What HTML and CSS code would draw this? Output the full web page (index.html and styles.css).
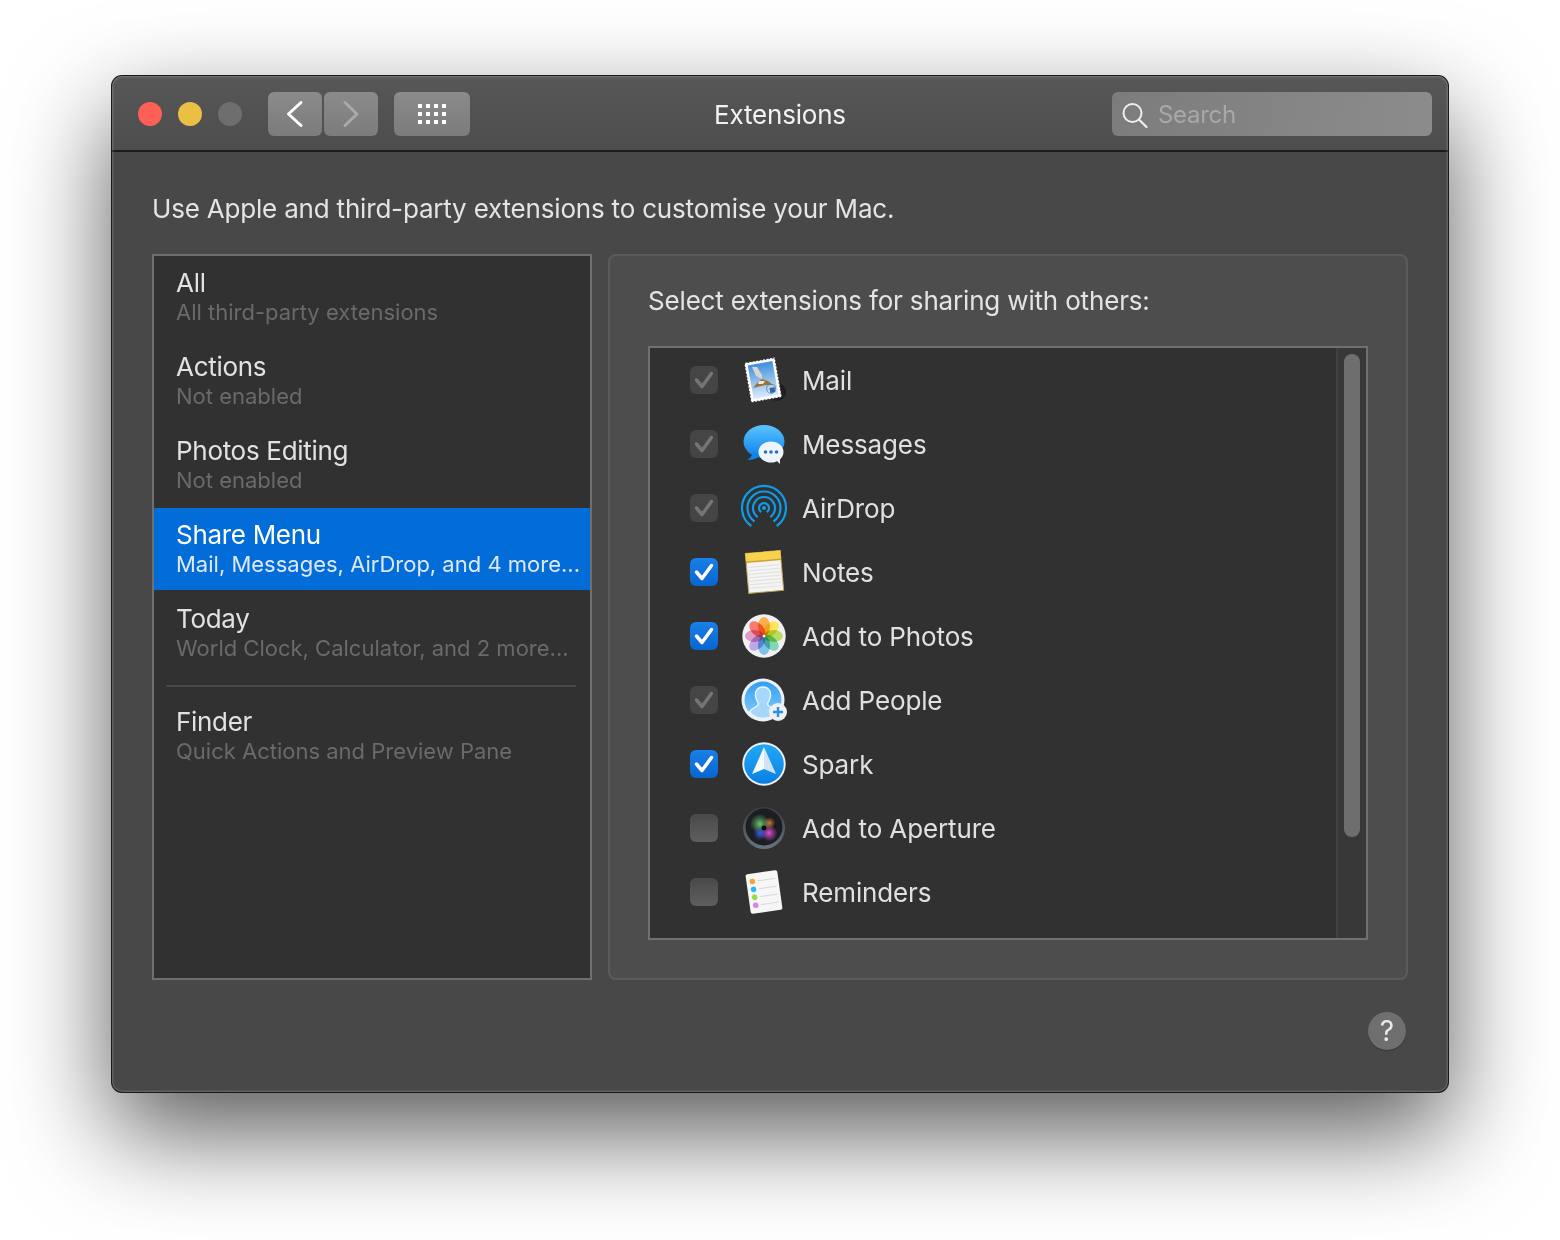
FILE: index.html
```html
<!DOCTYPE html>
<html>
<head>
    <meta charset="UTF-8">
    <title>Extensions</title>
    <link rel="stylesheet" href="styles.css">
</head>
<body>
<div class="window">
    <div class="titlebar">
        <div class="lights">
            <span class="light red"></span>
            <span class="light yellow"></span>
            <span class="light grey"></span>
        </div>
        <div class="nav">
            <div class="tbtn nav-btn">
                <svg width="54" height="44" viewBox="0 0 54 44"><path d="M33 10.500 L20.500 22 L33 33.500" fill="none" stroke="#fff" stroke-width="3" stroke-linecap="round" stroke-linejoin="round"/></svg>
            </div>
            <div class="tbtn nav-btn">
                <svg width="54" height="44" viewBox="0 0 54 44"><path d="M21 10.500 L33 22 L21 33.500" fill="none" stroke="#aaa" stroke-width="3" stroke-linecap="round" stroke-linejoin="round"/></svg>
            </div>
        </div>
        <div class="tbtn grid-btn">
            <div class="dots">
                <i></i><i></i><i></i><i></i>
                <i></i><i></i><i></i><i></i>
                <i></i><i></i><i></i><i></i>
            </div>
        </div>
        <div class="title">Extensions</div>
        <div class="search">
            <svg width="30" height="44" viewBox="0 0 30 44"><circle cx="20.500" cy="21" r="9" fill="none" stroke="#eee" stroke-width="2"/><path d="M27 27.500 L34.500 35" fill="none" stroke="#eee" stroke-width="2.200" stroke-linecap="round"/></svg>
            <span class="search-text">Search</span>
        </div>
    </div>

    <div class="content">
        <div class="intro">Use Apple and third-party extensions to customise your Mac.</div>
        <div class="columns">
            <div class="sidebar">
                <div class="item"><div class="item-name">All</div><div class="item-sub">All third-party extensions</div></div>
                <div class="item"><div class="item-name">Actions</div><div class="item-sub">Not enabled</div></div>
                <div class="item"><div class="item-name">Photos Editing</div><div class="item-sub">Not enabled</div></div>
                <div class="item active"><div class="item-name">Share Menu</div><div class="item-sub">Mail, Messages, AirDrop, and 4 more...</div></div>
                <div class="item"><div class="item-name">Today</div><div class="item-sub">World Clock, Calculator, and 2 more...</div></div>
                <div class="sep"></div>
                <div class="item"><div class="item-name">Finder</div><div class="item-sub">Quick Actions and Preview Pane</div></div>
            </div>

            <div class="panel">
                <div class="panel-title">Select extensions for sharing with others:</div>
                <div class="list">
                    <div class="rows">
                        <div class="row">
                            <span class="check locked"><svg width="28" height="28" viewBox="0 0 28 28"><path d="M6.500 14 L12 20.500 L21.500 7.500"/></svg></span>
                            <svg class="app" width="48" height="48" viewBox="0 0 48 48">
                                <defs>
                                    <linearGradient id="sky" x1="0" y1="0" x2="0" y2="1"><stop offset="0" stop-color="#3f8fdc"/><stop offset="1" stop-color="#d8ecfa"/></linearGradient>
                                </defs>
                                <circle cx="37" cy="36" r="9" fill="#1f1f21"/>
                                <g transform="rotate(-10 23 24)">
                                    <rect x="7.500" y="4" width="31" height="40" fill="#fff"/>
                                    <rect x="7.500" y="4" width="31" height="40" fill="none" stroke="#2f2f2f" stroke-width="1.200" stroke-dasharray="1.500 2"/>
                                    <rect x="10.500" y="7" width="25" height="34" fill="url(#sky)"/>
                                    <circle cx="29.500" cy="34" r="4.500" fill="none" stroke="#5f8ab3" stroke-width="1"/>
                                    <rect x="28" y="33" width="5" height="5" fill="#32689f"/>
                                </g>
                                <path d="M12 11 L17 11 L22 19 L22 23 L16 20 Z" fill="#d9d6cd"/>
                                <path d="M13 32 L18 26 L22 23 L28 25 L33 29 L26 29 L21 30 Z" fill="#9a7338"/>
                                <path d="M19 25 L25 25 L23 28 L18 28 Z" fill="#f0e6d2"/>
                            </svg>
                            <span class="row-name">Mail</span>
                        </div>
                        <div class="row">
                            <span class="check locked"><svg width="28" height="28" viewBox="0 0 28 28"><path d="M6.500 14 L12 20.500 L21.500 7.500"/></svg></span>
                            <svg class="app" width="48" height="48" viewBox="0 0 48 48">
                                <defs>
                                    <linearGradient id="bubble" x1="0" y1="0" x2="0" y2="1"><stop offset="0" stop-color="#5cc4fb"/><stop offset="1" stop-color="#0a7fee"/></linearGradient>
                                </defs>
                                <ellipse cx="24" cy="21.500" rx="20.500" ry="16.500" fill="url(#bubble)"/>
                                <path d="M13 32 Q12 37 7 40 Q15 40 20 36 Z" fill="#0d84ee"/>
                                <ellipse cx="31" cy="32" rx="12.500" ry="10.500" fill="#eef4fb"/>
                                <path d="M36 40 L40 44 L40 37 Z" fill="#eef4fb"/>
                                <circle cx="25.500" cy="32" r="1.800" fill="#2a6fc0"/>
                                <circle cx="31" cy="32" r="1.800" fill="#2a6fc0"/>
                                <circle cx="36.500" cy="32" r="1.800" fill="#2a6fc0"/>
                            </svg>
                            <span class="row-name">Messages</span>
                        </div>
                        <div class="row">
                            <span class="check locked"><svg width="28" height="28" viewBox="0 0 28 28"><path d="M6.500 14 L12 20.500 L21.500 7.500"/></svg></span>
                            <svg class="app" width="48" height="48" viewBox="0 0 48 48">
                                <g fill="none" stroke="#0f9be8" stroke-width="2.200">
                                    <path d="M11.400 42 A22 22 0 1 1 36.600 42"/>
                                    <path d="M14.500 37.500 A16.500 16.500 0 1 1 33.500 37.500"/>
                                    <path d="M17.700 33 A11 11 0 1 1 30.300 33"/>
                                    <path d="M21.100 28.100 A5 5 0 1 1 26.900 28.100"/>
                                </g>
                                <circle cx="24" cy="24" r="2" fill="#0f9be8"/>
                            </svg>
                            <span class="row-name">AirDrop</span>
                        </div>
                        <div class="row">
                            <span class="check on"><svg width="28" height="28" viewBox="0 0 28 28"><path d="M6.500 14 L12 20.500 L21.500 7.500"/></svg></span>
                            <svg class="app" width="48" height="48" viewBox="0 0 48 48">
                                <g transform="rotate(-5 24 24)">
                                    <rect x="7" y="4" width="35" height="40" fill="#f4f4f2" stroke="#b99a55" stroke-width="1"/>
                                    <g stroke="#e0e0e0" stroke-width="1">
                                        <path d="M7 18 H42 M7 21.500 H42 M7 25 H42 M7 28.500 H42 M7 32 H42 M7 35.500 H42 M7 39 H42"/>
                                    </g>
                                    <rect x="7" y="4" width="35" height="9" fill="#f8d24a"/>
                                    <rect x="7" y="12" width="35" height="1.500" fill="#c9a23a"/>
                                </g>
                            </svg>
                            <span class="row-name">Notes</span>
                        </div>
                        <div class="row">
                            <span class="check on"><svg width="28" height="28" viewBox="0 0 28 28"><path d="M6.500 14 L12 20.500 L21.500 7.500"/></svg></span>
                            <svg class="app" width="48" height="48" viewBox="0 0 48 48">
                                <circle cx="24" cy="24" r="21.700" fill="#f1f1f1"/>
                                <g class="flower">
                                    <ellipse cx="24" cy="14.500" rx="6" ry="9.500" fill="#fbb04a"/>
                                    <ellipse cx="24" cy="14.500" rx="6" ry="9.500" fill="#fde458" transform="rotate(45 24 24)"/>
                                    <ellipse cx="24" cy="14.500" rx="6" ry="9.500" fill="#b7dd66" transform="rotate(90 24 24)"/>
                                    <ellipse cx="24" cy="14.500" rx="6" ry="9.500" fill="#80d6b6" transform="rotate(135 24 24)"/>
                                    <ellipse cx="24" cy="14.500" rx="6" ry="9.500" fill="#7cc2ea" transform="rotate(180 24 24)"/>
                                    <ellipse cx="24" cy="14.500" rx="6" ry="9.500" fill="#b9a9e4" transform="rotate(225 24 24)"/>
                                    <ellipse cx="24" cy="14.500" rx="6" ry="9.500" fill="#e29bc6" transform="rotate(270 24 24)"/>
                                    <ellipse cx="24" cy="14.500" rx="6" ry="9.500" fill="#f67a72" transform="rotate(315 24 24)"/>
                                </g>
                                <circle cx="24" cy="24" r="1.500" fill="#f4f4f4"/>
                            </svg>
                            <span class="row-name">Add to Photos</span>
                        </div>
                        <div class="row">
                            <span class="check locked"><svg width="28" height="28" viewBox="0 0 28 28"><path d="M6.500 14 L12 20.500 L21.500 7.500"/></svg></span>
                            <svg class="app" width="48" height="48" viewBox="0 0 48 48">
                                <defs>
                                    <linearGradient id="people" x1="0" y1="0" x2="0" y2="1"><stop offset="0" stop-color="#2f9ff2"/><stop offset="1" stop-color="#8ccbfb"/></linearGradient>
                                </defs>
                                <circle cx="23" cy="24" r="21.500" fill="#eef1f4"/>
                                <circle cx="23" cy="24" r="18.500" fill="url(#people)"/>
                                <path d="M23 11 C17.500 11 15 15 15.500 20 C16 24 18 26 18.500 28 C18 31 11 32 9.500 36 Q15 42.500 23 42.500 Q31 42.500 36.500 36 C35 32 28 31 27.500 28 C28 26 30 24 30.500 20 C31 15 28.500 11 23 11 Z" fill="#a6d7fb" stroke="#eaf5fe" stroke-width="1.400"/>
                                <circle cx="38" cy="36" r="9" fill="#eef1f4"/>
                                <path d="M38 31 V41 M33 36 H43" stroke="#2b8fe3" stroke-width="2.400"/>
                            </svg>
                            <span class="row-name">Add People</span>
                        </div>
                        <div class="row">
                            <span class="check on"><svg width="28" height="28" viewBox="0 0 28 28"><path d="M6.500 14 L12 20.500 L21.500 7.500"/></svg></span>
                            <svg class="app" width="48" height="48" viewBox="0 0 48 48">
                                <defs>
                                    <linearGradient id="spark" x1="0" y1="0" x2="0" y2="1"><stop offset="0" stop-color="#22a8f7"/><stop offset="1" stop-color="#0b7fe2"/></linearGradient>
                                </defs>
                                <circle cx="24" cy="24" r="21.700" fill="#f0f3f6"/>
                                <circle cx="24" cy="24" r="19.800" fill="url(#spark)"/>
                                <path d="M24 7 L36 34 L24 29 Z" fill="#cfe4f8"/>
                                <path d="M24 7 L12 34 L24 29 Z" fill="#f4f9fe"/>
                            </svg>
                            <span class="row-name">Spark</span>
                        </div>
                        <div class="row">
                            <span class="check off"></span>
                            <svg class="app" width="48" height="48" viewBox="0 0 48 48">
                                <defs>
                                    <linearGradient id="rim" x1="0" y1="0" x2="0" y2="1"><stop offset="0" stop-color="#3a3d42"/><stop offset="1" stop-color="#67747f"/></linearGradient>
                                    <radialGradient id="lensG" cx=".5" cy=".5" r=".5"><stop offset="0" stop-color="#66c86f"/><stop offset="1" stop-color="#66c86f" stop-opacity="0"/></radialGradient>
                                    <radialGradient id="lensP" cx=".5" cy=".5" r=".5"><stop offset="0" stop-color="#e24fd0"/><stop offset="1" stop-color="#e24fd0" stop-opacity="0"/></radialGradient>
                                    <radialGradient id="lensB" cx=".5" cy=".5" r=".5"><stop offset="0" stop-color="#3a5fe0"/><stop offset="1" stop-color="#3a5fe0" stop-opacity="0"/></radialGradient>
                                    <radialGradient id="lensO" cx=".5" cy=".5" r=".5"><stop offset="0" stop-color="#c9803a"/><stop offset="1" stop-color="#c9803a" stop-opacity="0"/></radialGradient>
                                </defs>
                                <circle cx="24" cy="24" r="21" fill="url(#rim)"/>
                                <circle cx="24" cy="23" r="18.500" fill="#1d1e21"/>
                                <circle cx="24" cy="24" r="11.500" fill="#17131f"/>
                                <circle cx="20" cy="20" r="10" fill="url(#lensG)"/>
                                <circle cx="29" cy="29" r="8.500" fill="url(#lensP)"/>
                                <circle cx="20" cy="29.500" r="7" fill="url(#lensB)"/>
                                <circle cx="29.500" cy="19" r="6" fill="url(#lensO)"/>
                                <circle cx="24" cy="24" r="2.500" fill="#0e0c14"/>
                            </svg>
                            <span class="row-name">Add to Aperture</span>
                        </div>
                        <div class="row">
                            <span class="check off"></span>
                            <svg class="app" width="48" height="48" viewBox="0 0 48 48">
                                <g transform="rotate(-8 24 24)">
                                    <rect x="8" y="4" width="32" height="40" rx="2" fill="#f6f6f6"/>
                                    <circle cx="14" cy="12" r="2.800" fill="#f5a33a"/>
                                    <circle cx="14" cy="20" r="2.800" fill="#35b6ea"/>
                                    <circle cx="14" cy="28" r="2.800" fill="#8fdc4c"/>
                                    <circle cx="14" cy="36" r="2.800" fill="#dc83e6"/>
                                    <path d="M19 12 H37 M19 20 H37 M19 28 H37 M19 36 H37" stroke="#d8d8d8" stroke-width="1"/>
                                </g>
                            </svg>
                            <span class="row-name">Reminders</span>
                        </div>
                    </div>
                    <div class="track"><div class="thumb"></div></div>
                </div>
            </div>
        </div>
        <div class="footer">
            <div class="help">?</div>
        </div>
    </div>
</div>
</body>
</html>
```

FILE: styles.css
```css
* {
    box-sizing: border-box;
}

html, body {
    margin: 0;
    height: 1240px;
    overflow: hidden;
}

body {
    background-color: #fff;
    padding: 76px 112px 0 112px;
    font-family: Inter, "Liberation Sans", sans-serif;
    color: #e0e0e0;
}

.window {
    width: 1336px;
    height: 1016px;
    border-radius: 10px;
    background-color: #484848;
    box-shadow: 0 0 0 1px #1a1a1a, 0 40px 100px rgba(0, 0, 0, 0.66);
    overflow: hidden;
    display: flex;
    flex-direction: column;
    position: relative;
}

/* light bevel on the window edge, lies over the content */
.window::after {
    content: "";
    position: absolute;
    top: 0;
    left: 0;
    right: 0;
    bottom: 0;
    border-radius: 10px;
    box-shadow: inset 0 0 0 1.500px rgba(255, 255, 255, 0.14);
    pointer-events: none;
}

.titlebar {
    height: 76px;
    flex: none;
    display: flex;
    align-items: center;
    padding: 2px 16px 0 26px;
    background: linear-gradient(#575757, #4d4d4d);
    border-bottom: 2px solid #1c1c1c;
    position: relative;
}

.lights {
    display: flex;
    gap: 16px;
}

.light {
    width: 24px;
    height: 24px;
    border-radius: 50%;
}

.red { background-color: #fe5f57; }
.yellow { background-color: #e9c043; }
.grey { background-color: #6e6e6e; }

.nav {
    display: flex;
    gap: 2px;
    margin-left: 26px;
}

.tbtn {
    height: 44px;
    border-radius: 6px;
    background: linear-gradient(#8b8b8b, #7b7b7b);
    display: flex;
    align-items: center;
    justify-content: center;
}

.nav-btn {
    width: 54px;
}

.grid-btn {
    width: 76px;
    margin-left: 16px;
}

.dots {
    display: grid;
    grid-template-columns: repeat(4, 4px);
    grid-auto-rows: 4px;
    gap: 4px;
}

.dots i {
    background-color: #fff;
}

.title {
    position: absolute; /* stays centred on the window, not on the leftover space */
    left: 0;
    right: 0;
    top: 0;
    bottom: 0;
    display: flex;
    align-items: center;
    justify-content: center;
    padding-top: 2px;
    font-size: 26px;
    letter-spacing: -0.2px;
    color: #f2f2f2;
    pointer-events: none;
}

.search {
    width: 320px;
    height: 44px;
    margin-left: auto;
    border-radius: 6px;
    background: linear-gradient(100deg, #7c7c7c, #8c8c8c);
    display: flex;
    align-items: center;
}

.search svg {
    overflow: visible;
}

.search-text {
    margin-left: 16px;
    font-size: 24px;
    letter-spacing: -0.3px;
    color: #a8a8a8;
}

.content {
    flex: 1;
    padding: 0 40px;
    display: flex;
    flex-direction: column;
}

.intro {
    height: 102px;
    padding-top: 38px;
    font-size: 26px;
    letter-spacing: -0.19px;
    line-height: 38px;
    color: #e4e4e4;
}

.columns {
    display: flex;
    gap: 16px;
    height: 726px;
}

.sidebar {
    width: 440px;
    border: 2px solid #6f6f6f;
    background-color: #313131;
}

.item {
    height: 82px;
    margin-bottom: 2px;
    padding: 9px 10px 0 22px;
}

.item-name {
    font-size: 26px;
    letter-spacing: -0.3px;
    line-height: 36px;
    color: #e2e2e2;
}

.item-sub {
    font-size: 22px;
    line-height: 23px;
    color: #6a6a6a;
    white-space: nowrap;
}

.item.active {
    background-color: #026cd9;
}

.item.active .item-name {
    color: #fff;
}

.item.active .item-sub {
    color: #dfe9f5;
}

.sep {
    height: 2px;
    margin: 11px 14px 8px 12px;
    background-color: #484848;
}

.panel {
    width: 800px;
    border: 2px solid #5b5b5b;
    border-radius: 8px;
    background-color: #4d4d4d;
    padding: 0 38px;
}

.panel-title {
    height: 90px;
    padding-top: 26px;
    font-size: 26px;
    letter-spacing: -0.17px;
    line-height: 38px;
    color: #e4e4e4;
}

.list {
    width: 720px;
    height: 594px;
    border: 2px solid #707070;
    background-color: #313131;
    display: flex;
}

.rows {
    flex: 1;
}

.row {
    height: 64px;
    display: flex;
    align-items: center;
    padding-left: 40px;
}

.check {
    width: 28px;
    height: 28px;
    border-radius: 6px;
    flex: none;
}

.check svg {
    display: block;
}

.check path {
    fill: none;
    stroke-width: 3.500;
    stroke-linecap: round;
    stroke-linejoin: round;
}

.check.locked {
    background-color: #454545;
}

.check.locked path {
    stroke: #757575;
}

.check.on {
    background: linear-gradient(#1a7fe8, #0865cf);
}

.check.on path {
    stroke: #fff;
}

.check.off {
    background: linear-gradient(#4a4a4a, #5e5e5e);
}

.app {
    margin-left: 22px;
    flex: none;
}

.flower {
    isolation: isolate;
}

.flower ellipse {
    mix-blend-mode: multiply;
}

.row-name {
    margin-left: 14px;
    font-size: 26px;
    letter-spacing: -0.13px;
    color: #e0e0e0;
}

.track {
    width: 30px;
    flex: none;
    border-left: 2px solid #414141;
    background-color: #383838;
    padding: 6px 6px 0 6px;
}

.thumb {
    width: 16px;
    height: 483px;
    border-radius: 8px;
    background-color: #6e6e6e;
}

.footer {
    display: flex;
    justify-content: flex-end;
    padding: 32px 2px 0 0;
}

.help {
    width: 38px;
    height: 38px;
    border-radius: 50%;
    background-color: #6f6f6f;
    box-shadow: 0 1px 1px rgba(0, 0, 0, 0.25);
    display: flex;
    align-items: center;
    justify-content: center;
    font-size: 28px;
    color: #e8e8e8;
}
```
